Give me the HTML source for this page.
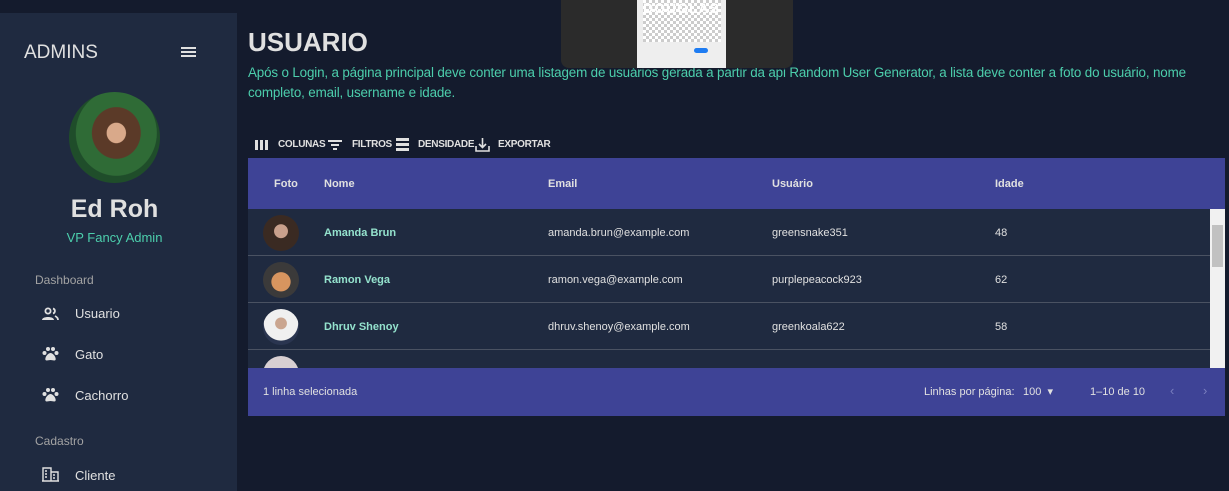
<!DOCTYPE html><html><head><meta charset="utf-8"><style>
*{margin:0;padding:0;box-sizing:border-box}
body{width:1229px;height:491px;overflow:hidden;background:#141b2d;font-family:"Liberation Sans",sans-serif;position:relative;color:#e0e0e0}
.a{position:absolute}
.side{left:0;top:13px;width:237px;height:478px;background:#1f2a40}
.top{left:0;top:0;width:237px;height:13px;background:#141b2d}
.menu{font-size:13px;color:#e0e0e0}
.hdr{left:248px;top:158px;width:977px;height:51px;background:#3e4396;font-size:11px;font-weight:bold;color:#e0e0e0}
.row{left:248px;width:962px;height:47px;background:#1f2a40;border-bottom:1px solid #4a5262;font-size:11px}
.row span{position:absolute;top:18px}
.nm{color:#94e2cd;font-weight:bold}
.av{position:absolute;left:15px;top:6px;width:36px;height:36px;border-radius:50%}
.tb{position:absolute;top:139px;font-size:10px;font-weight:bold;color:#e0e0e0;letter-spacing:-0.3px}
</style></head><body>
<div class="a top"></div>
<div class="a side"></div>
<div class="a" style="left:24px;top:42px;font-size:19px;color:#e0e0e0">ADMINS</div>
<div class="a" style="left:181px;top:47px;width:15px;height:2px;background:#e0e0e0;box-shadow:0 4px 0 #e0e0e0,0 8px 0 #e0e0e0"></div>
<div class="a" style="left:69px;top:92px;width:91px;height:91px;border-radius:50%;background:radial-gradient(ellipse at 52% 45%,#d9a98a 0 14%,#5b3a28 15% 36%,#2f6b36 37% 60%,#1f4d2a 61%)"></div>
<div class="a" style="left:0;width:229px;top:195px;text-align:center;font-size:25px;font-weight:bold;color:#e0e0e0">Ed Roh</div>
<div class="a" style="left:0;width:229px;top:230px;text-align:center;font-size:13px;color:#4cceac">VP Fancy Admin</div>
<div class="a" style="left:35px;top:273px;font-size:12px;color:#a3a3a3">Dashboard</div>
<div class="a" style="left:35px;top:434px;font-size:12px;color:#a3a3a3">Cadastro</div>
<svg class="a" style="left:42px;top:307px" width="17" height="14" viewBox="0 0 17 14" fill="#e0e0e0"><circle cx="6" cy="4" r="2.6" fill="none" stroke="#e0e0e0" stroke-width="1.8"/><path d="M0 13c0-4 12-4 12 0z"/><path d="M11 1.5a2.6 2.6 0 010 5M13 9c2 1 3 2 3 4" fill="none" stroke="#e0e0e0" stroke-width="1.8"/></svg>
<div class="a menu" style="left:75px;top:306px">Usuario</div>
<svg class="a" style="left:42px;top:346px" width="17" height="16" viewBox="0 0 17 16" fill="#e0e0e0"><circle cx="2.5" cy="7" r="2"/><circle cx="6" cy="3" r="2"/><circle cx="11" cy="3" r="2"/><circle cx="14.5" cy="7" r="2"/><path d="M8.5 7c-3 0-6 5-5 7 1 1 3 0 5 0s4 1 5 0c1-2-2-7-5-7z"/></svg>
<div class="a menu" style="left:75px;top:347px">Gato</div>
<svg class="a" style="left:42px;top:387px" width="17" height="16" viewBox="0 0 17 16" fill="#e0e0e0"><circle cx="2.5" cy="7" r="2"/><circle cx="6" cy="3" r="2"/><circle cx="11" cy="3" r="2"/><circle cx="14.5" cy="7" r="2"/><path d="M8.5 7c-3 0-6 5-5 7 1 1 3 0 5 0s4 1 5 0c1-2-2-7-5-7z"/></svg>
<div class="a menu" style="left:75px;top:388px">Cachorro</div>
<svg class="a" style="left:42px;top:467px" width="17" height="15" viewBox="0 0 17 15" fill="none" stroke="#e0e0e0" stroke-width="1.4"><path d="M1 14V1h8v13M9 5h7v9M0 14h17M3 4h2M3 7h2M3 10h2M11 8h2M11 11h2"/></svg>
<div class="a menu" style="left:75px;top:468px">Cliente</div>

<div class="a" style="left:248px;top:27px;font-size:26px;font-weight:bold;color:#e0e0e0">USUARIO</div>
<div class="a" style="left:248px;top:63px;width:980px;font-size:13.4px;line-height:20px;color:#4cceac;letter-spacing:-0.15px">Após o Login, a página principal deve conter uma listagem de usuários gerada a partir da api Random User Generator, a lista deve conter a foto do usuário, nome completo, email, username e idade.</div>

<div class="a" style="left:561px;top:0;width:232px;height:68px;background:#2b2b2b;border-radius:0 0 8px 8px"></div>
<div class="a" style="left:637px;top:0;width:89px;height:68px;background:#eee"></div>
<div class="a" style="left:643px;top:0;width:78px;height:42px;background:repeating-conic-gradient(#ccc 0 25%,#fff 0 50%) 0 0/6px 6px"></div>
<div class="a" style="left:643px;top:0;font-size:14px;font-weight:bold;color:#fff;letter-spacing:1px">DOUGLAS</div>
<div class="a" style="left:694px;top:48px;width:14px;height:5px;border-radius:3px;background:#1e7cf2"></div>

<svg class="a" style="left:255px;top:140px" width="14" height="10" fill="#e0e0e0"><rect x="0" y="0" width="3" height="10"/><rect x="5" y="0" width="3" height="10"/><rect x="10" y="0" width="3" height="10"/></svg>
<div class="tb" style="left:278px">COLUNAS</div>
<svg class="a" style="left:328px;top:139px" width="16" height="12" fill="#e0e0e0"><rect x="0" y="1" width="14" height="2"/><rect x="3" y="5" width="8" height="2"/><rect x="5" y="9" width="4" height="2"/></svg>
<div class="tb" style="left:352px">FILTROS</div>
<svg class="a" style="left:396px;top:138px" width="13" height="13" fill="#e0e0e0"><rect y="0" width="13" height="3"/><rect y="5" width="13" height="3"/><rect y="10" width="13" height="3"/></svg>
<div class="tb" style="left:418px">DENSIDADE</div>
<svg class="a" style="left:475px;top:137px" width="15" height="15" fill="none" stroke="#e0e0e0" stroke-width="1.6"><path d="M7.5 1v9M4 7l3.5 3.5L11 7M1 9v5h13V9"/></svg>
<div class="tb" style="left:498px">EXPORTAR</div>

<div class="a hdr"><span class="a" style="left:26px;top:20px">Foto</span><span class="a" style="left:76px;top:20px">Nome</span><span class="a" style="left:300px;top:20px">Email</span><span class="a" style="left:524px;top:20px">Usuário</span><span class="a" style="left:747px;top:20px">Idade</span></div>
<div class="a row" style="top:209px"><div class="av" style="background:radial-gradient(circle at 50% 45%,#c9a08c 0 25%,#3a2a22 27%)"></div><span class="nm" style="left:76px">Amanda Brun</span><span style="left:300px">amanda.brun@example.com</span><span style="left:524px">greensnake351</span><span style="left:747px">48</span></div>
<div class="a row" style="top:256px"><div class="av" style="background:radial-gradient(circle at 50% 55%,#d8955f 0 35%,#3b3a3a 37%)"></div><span class="nm" style="left:76px">Ramon Vega</span><span style="left:300px">ramon.vega@example.com</span><span style="left:524px">purplepeacock923</span><span style="left:747px">62</span></div>
<div class="a row" style="top:303px"><div class="av" style="background:radial-gradient(circle at 50% 40%,#caa58f 0 20%,#f0f0f0 22% 60%,#2a3550 62%)"></div><span class="nm" style="left:76px">Dhruv Shenoy</span><span style="left:300px">dhruv.shenoy@example.com</span><span style="left:524px">greenkoala622</span><span style="left:747px">58</span></div>
<div class="a row" style="top:350px;height:18px;overflow:hidden;border:none"><div class="av" style="background:#d8cfd2"></div></div>
<div class="a" style="left:1210px;top:209px;width:15px;height:159px;background:#f1f1f1"></div>
<div class="a" style="left:1212px;top:225px;width:11px;height:42px;background:#c1c1c1"></div>
<div class="a" style="left:248px;top:368px;width:977px;height:48px;background:#3e4396;font-size:11px;color:#e0e0e0"><span class="a" style="left:15px;top:18px">1 linha selecionada</span><span class="a" style="left:676px;top:18px">Linhas por página:</span><span class="a" style="left:775px;top:17px">100 &nbsp;▾</span><span class="a" style="left:842px;top:18px">1–10 de 10</span><span class="a" style="left:922px;top:15px;color:#7a7fbf;font-size:13px">‹</span><span class="a" style="left:955px;top:15px;color:#7a7fbf;font-size:13px">›</span></div>
</body></html>
